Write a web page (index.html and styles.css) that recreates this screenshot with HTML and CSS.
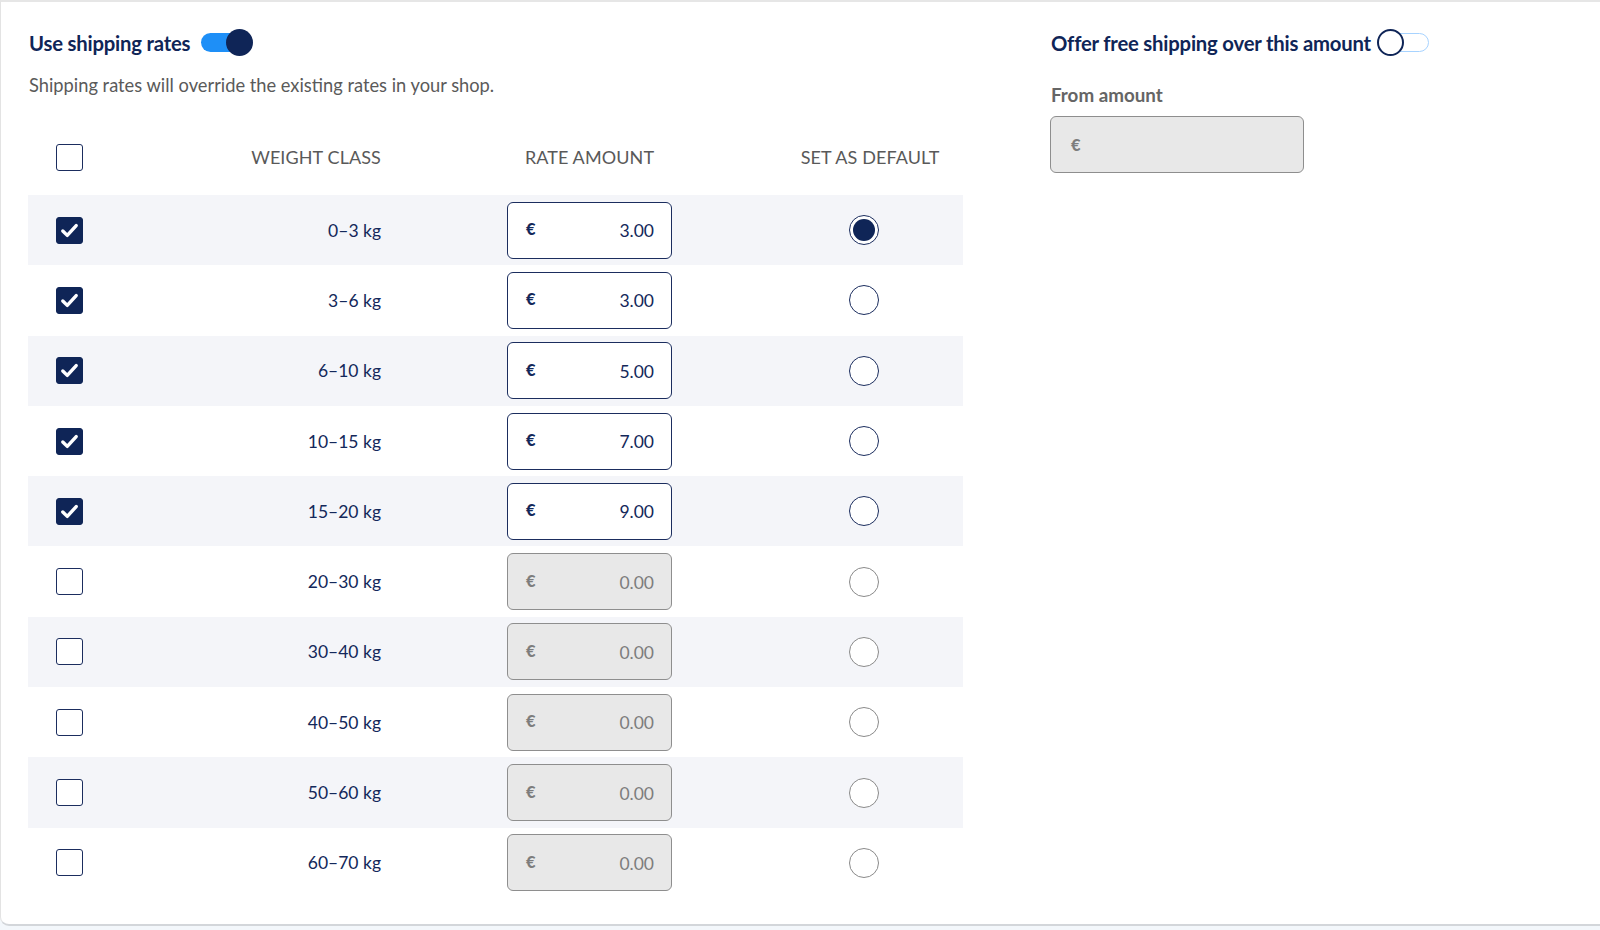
FILE: index.html
```html
<!DOCTYPE html>
<html lang="en">
<head>
<meta charset="utf-8">
<title>Shipping rates</title>
<link rel="stylesheet" href="styles.css">
</head>
<body>
<div class="card">
  <div class="left">
    <div class="title-row">
      <span class="title">Use shipping rates</span>
      <span class="toggle on"><span class="track"></span><span class="knob"></span></span>
    </div>
    <p class="subtitle">Shipping rates will override the existing rates in your shop.</p>

    <div class="table">
      <div class="row head">
        <div class="c-cb"><span class="cb"></span></div>
        <div class="c-w">WEIGHT CLASS</div>
        <div class="c-r">RATE AMOUNT</div>
        <div class="c-d head-d">SET AS DEFAULT</div>
      </div>

      <div class="row alt">
        <div class="c-cb"><span class="cb checked"><svg viewBox="0 0 28 28"><path d="M6.5 14.5 L11.5 19.5 L21.5 8.5"/></svg></span></div>
        <div class="c-w">0–3 kg</div>
        <div class="c-r"><div class="amount"><span class="cur">€</span><span class="val">3.00</span></div></div>
        <div class="c-d"><span class="radio selected"></span></div>
      </div>
      <div class="row">
        <div class="c-cb"><span class="cb checked"><svg viewBox="0 0 28 28"><path d="M6.5 14.5 L11.5 19.5 L21.5 8.5"/></svg></span></div>
        <div class="c-w">3–6 kg</div>
        <div class="c-r"><div class="amount"><span class="cur">€</span><span class="val">3.00</span></div></div>
        <div class="c-d"><span class="radio"></span></div>
      </div>
      <div class="row alt">
        <div class="c-cb"><span class="cb checked"><svg viewBox="0 0 28 28"><path d="M6.5 14.5 L11.5 19.5 L21.5 8.5"/></svg></span></div>
        <div class="c-w">6–10 kg</div>
        <div class="c-r"><div class="amount"><span class="cur">€</span><span class="val">5.00</span></div></div>
        <div class="c-d"><span class="radio"></span></div>
      </div>
      <div class="row">
        <div class="c-cb"><span class="cb checked"><svg viewBox="0 0 28 28"><path d="M6.5 14.5 L11.5 19.5 L21.5 8.5"/></svg></span></div>
        <div class="c-w">10–15 kg</div>
        <div class="c-r"><div class="amount"><span class="cur">€</span><span class="val">7.00</span></div></div>
        <div class="c-d"><span class="radio"></span></div>
      </div>
      <div class="row alt">
        <div class="c-cb"><span class="cb checked"><svg viewBox="0 0 28 28"><path d="M6.5 14.5 L11.5 19.5 L21.5 8.5"/></svg></span></div>
        <div class="c-w">15–20 kg</div>
        <div class="c-r"><div class="amount"><span class="cur">€</span><span class="val">9.00</span></div></div>
        <div class="c-d"><span class="radio"></span></div>
      </div>
      <div class="row">
        <div class="c-cb"><span class="cb"></span></div>
        <div class="c-w">20–30 kg</div>
        <div class="c-r"><div class="amount disabled"><span class="cur">€</span><span class="val">0.00</span></div></div>
        <div class="c-d"><span class="radio disabled"></span></div>
      </div>
      <div class="row alt">
        <div class="c-cb"><span class="cb"></span></div>
        <div class="c-w">30–40 kg</div>
        <div class="c-r"><div class="amount disabled"><span class="cur">€</span><span class="val">0.00</span></div></div>
        <div class="c-d"><span class="radio disabled"></span></div>
      </div>
      <div class="row">
        <div class="c-cb"><span class="cb"></span></div>
        <div class="c-w">40–50 kg</div>
        <div class="c-r"><div class="amount disabled"><span class="cur">€</span><span class="val">0.00</span></div></div>
        <div class="c-d"><span class="radio disabled"></span></div>
      </div>
      <div class="row alt">
        <div class="c-cb"><span class="cb"></span></div>
        <div class="c-w">50–60 kg</div>
        <div class="c-r"><div class="amount disabled"><span class="cur">€</span><span class="val">0.00</span></div></div>
        <div class="c-d"><span class="radio disabled"></span></div>
      </div>
      <div class="row">
        <div class="c-cb"><span class="cb"></span></div>
        <div class="c-w">60–70 kg</div>
        <div class="c-r"><div class="amount disabled"><span class="cur">€</span><span class="val">0.00</span></div></div>
        <div class="c-d"><span class="radio disabled"></span></div>
      </div>
    </div>
  </div>

  <div class="right">
    <div class="title-row">
      <span class="title">Offer free shipping over this amount</span>
      <span class="toggle off"><span class="track"></span><span class="knob"></span></span>
    </div>
    <div class="label">From amount</div>
    <div class="from-input"><span class="cur">€</span></div>
  </div>
</div>
</body>
</html>
```

FILE: styles.css
```css
* { box-sizing: border-box; }
html, body { margin: 0; padding: 0; }
body {
  background: #f3f7fb;
  font-family: Lato, "Open Sans", sans-serif;
  color: #13285a;
  width: 1600px;
  height: 930px;
  overflow: hidden;
}
.card {
  background: #fff;
  width: 1620px;
  height: 926px;
  border-top: 2px solid #e6e6e6;
  border-bottom: 2px solid #d3d6da;
  border-left: 1px solid #e3e3e3;
  border-radius: 0 0 0 9px;
  padding: 27px 0 0 27px;
  display: flex;
  gap: 87px;
}
.left { width: 935px; }
.right { width: 420px; }

.title-row {
  display: flex;
  align-items: center;
  height: 27px;
  padding-left: 1px;
}
.title {
  font-size: 20.3px;
  font-weight: 700;
  color: #0f2557;
  letter-spacing: -0.2px;
}
.toggle {
  position: relative;
  display: inline-block;
  height: 27px;
}
.toggle.on { width: 52px; margin-left: 11px; }
.toggle.off { width: 52px; margin-left: 6px; }
.toggle .track {
  position: absolute;
  top: 4px; bottom: 4px; left: 0; right: 2px;
  border-radius: 10px;
}
.toggle.on .track { background: #1e8ff7; }
.toggle.off .track {
  left: 12px;
  right: 0;
  top: 4px; bottom: 4px;
  background: #fff;
  border: 1.5px solid #a7d3ff;
}
.toggle .knob {
  position: absolute;
  top: 0;
  width: 27px; height: 27px;
  border-radius: 50%;
}
.toggle.on .knob { right: 0; background: #0f2557; }
.toggle.off .knob {
  left: 0; top: 0;
  width: 27px; height: 27px;
  background: #fff;
  border: 2px solid #0f2557;
}

.subtitle {
  margin: 17px 0 0 1px;
  font-size: 18.3px;
  line-height: 24px;
  color: #5a5a5a;
}

.table { margin-top: 28px; }
.row {
  display: flex;
  align-items: center;
  height: 70.3px;
}
.row.head { height: 70px; padding-bottom: 6px; }
.row.alt { background: #f4f5f9; }
.c-cb { width: 80px; padding-left: 28px; display: flex; align-items: center; }
.c-w {
  width: 273px;
  text-align: right;
  font-size: 17.5px;
  color: #13285a;
}
.head .c-w, .head .c-r, .head .c-d {
  font-size: 18px;
  color: #595959;
  letter-spacing: 0.1px;
}
.c-r { width: 417px; display: flex; justify-content: center; }
.c-d { width: 132px; display: flex; justify-content: center; }
.head .c-d.head-d { padding-left: 12px; white-space: nowrap; }

.cb {
  width: 27px; height: 27px;
  border: 1.5px solid #1b2d5e;
  border-radius: 3px;
  background: #fff;
  display: flex;
}
.cb.checked {
  background: #0f2557;
  border-color: #0f2557;
}
.cb svg { width: 100%; height: 100%; }
.cb svg path {
  fill: none;
  stroke: #fff;
  stroke-width: 3.8;
  stroke-linecap: round;
  stroke-linejoin: round;
}

.amount {
  width: 165px;
  height: 57px;
  border: 1.5px solid #1b2d5e;
  border-radius: 6px;
  background: #fff;
  display: flex;
  align-items: center;
  justify-content: space-between;
  padding: 0 17px 0 18px;
  color: #13285a;
}
.amount .cur { font-size: 16.5px; font-weight: 900; margin-top: -2px; }
.amount .val { font-size: 17.5px; margin-top: 1px; }
.amount.disabled {
  background: #e8e8e8;
  border-color: #8e8e8e;
  color: #7d7d7d;
}

.radio {
  width: 30px; height: 30px;
  border-radius: 50%;
  border: 1.6px solid #1b2d5e;
  background: #fff;
  display: flex;
  align-items: center;
  justify-content: center;
}
.radio.selected::after {
  content: "";
  width: 22px; height: 22px;
  border-radius: 50%;
  background: #0f2557;
}
.radio.disabled { border-color: #8a8a8a; }

.label {
  margin-top: 28px;
  font-size: 18.8px;
  line-height: 22px;
  font-weight: 700;
  color: #656565;
  padding-left: 1px;
}
.from-input {
  margin-top: 10px;
  width: 254px;
  height: 57px;
  border: 1.5px solid #8e8e8e;
  border-radius: 6px;
  background: #e8e8e8;
  display: flex;
  align-items: center;
  padding-left: 20px;
  color: #7d7d7d;
}
.from-input .cur { font-size: 16.5px; font-weight: 900; }
```
